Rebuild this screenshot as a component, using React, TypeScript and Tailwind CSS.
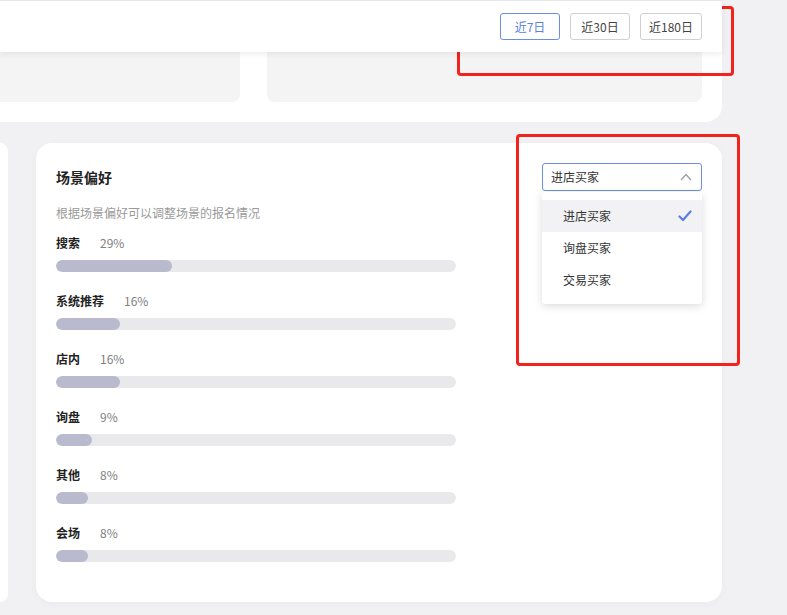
import { useState } from "react";

const scenes = [
  { name: "搜索", pct: 29 },
  { name: "系统推荐", pct: 16 },
  { name: "店内", pct: 16 },
  { name: "询盘", pct: 9 },
  { name: "其他", pct: 8 },
  { name: "会场", pct: 8 },
];

const buyerTypes = ["进店买家", "询盘买家", "交易买家"];
const ranges = [
  { label: "近7日", w: "w-[60px]" },
  { label: "近30日", w: "w-[60px]" },
  { label: "近180日", w: "w-[62px]" },
];

function ChevronUp() {
  return (
    <svg width="12" height="8" viewBox="0 0 12 8" fill="none">
      <path d="M1 7L6 1.5L11 7" stroke="#9a9aa0" strokeWidth="1.2" />
    </svg>
  );
}

function Check() {
  return (
    <svg width="14" height="12" viewBox="0 0 14 12" fill="none">
      <path d="M1.5 6.5L5 10L12.5 1.5" stroke="#5b7ee5" strokeWidth="2.2" strokeLinecap="round" strokeLinejoin="round" />
    </svg>
  );
}

export default function App() {
  const [range, setRange] = useState("近7日");
  const [buyer, setBuyer] = useState("进店买家");

  return (
    <div
      className="relative w-[787px] h-[615px] overflow-hidden bg-[#f1f1f4] text-[#333]"
      style={{ fontFamily: '"Noto Sans CJK SC", "Noto Sans", sans-serif' }}
    >
      {/* top card */}
      <div className="w-[722px] h-[122px] bg-white rounded-br-2xl flex flex-col">
        <div className="h-[52px] bg-white border-t border-[#e6e6ea] shadow-[0_2px_6px_rgba(0,0,0,0.08)] relative z-10 flex items-center justify-end gap-[10px] pr-[20px]">
          {ranges.map((r) => (
            <button
              key={r.label}
              onClick={() => setRange(r.label)}
              className={
                r.w +
                " h-[27px] rounded-[3px] border text-[12px] leading-none " +
                (range === r.label
                  ? "border-[#6b8fde] text-[#5b82dc]"
                  : "border-[#cfcfd4] text-[#444]")
              }
            >
              {r.label}
            </button>
          ))}
        </div>
        <div className="flex gap-[27px] pr-[20px]">
          <div className="w-[240px] h-[50px] bg-[#f4f4f5] rounded-br-lg" />
          <div className="flex-1 h-[50px] bg-[#f4f4f5] rounded-b-lg" />
        </div>
      </div>

      {/* bottom row */}
      <div className="flex gap-[28px] mt-[21px]">
        <div className="w-[8px] h-[459px] bg-white rounded-r-2xl" />
        <div className="relative w-[686px] h-[459px] bg-white rounded-2xl shadow-[0_2px_8px_rgba(0,0,0,0.03)] px-[20px] pt-[24px]">
          <div className="text-[14px] leading-[20px] font-semibold text-[#222]">场景偏好</div>
          <div className="mt-[17px] text-[12px] leading-[18px] text-[#9a9a9a]">
            根据场景偏好可以调整场景的报名情况
          </div>
          <div className="flex flex-col gap-[20px] mt-[12px]">
            {scenes.map((s) => (
              <div key={s.name} className="w-[400px]">
                <div className="flex items-center text-[12px] leading-[18px]">
                  <span className="font-semibold text-[#222]">{s.name}</span>
                  <span className="ml-5 text-[#808080]">{s.pct}%</span>
                </div>
                <div className="mt-[8px] h-[12px] rounded-full bg-[#e9e9ec] overflow-hidden">
                  <div className="h-full rounded-full bg-[#b9bacd]" style={{ width: `${s.pct}%` }} />
                </div>
              </div>
            ))}
          </div>

          {/* select */}
          <div className="absolute top-[20px] right-[20px] w-[160px]">
            <div className="h-[28px] border border-[#6b8fde] rounded-[3px] flex items-center justify-between pl-[8px] pr-[9px] text-[12px] text-[#333] bg-white">
              <span>{buyer}</span>
              <ChevronUp />
            </div>
            <div className="mt-[1px] bg-white rounded-[3px] shadow-[0_2px_8px_rgba(0,0,0,0.15)] py-[8px]">
              {buyerTypes.map((b) => (
                <div
                  key={b}
                  onClick={() => setBuyer(b)}
                  className={
                    "h-[32px] flex items-center justify-between pl-[21px] pr-[10px] text-[12px] text-[#333] cursor-pointer " +
                    (b === buyer ? "bg-[#f2f2f5]" : "")
                  }
                >
                  <span>{b}</span>
                  {b === buyer && <Check />}
                </div>
              ))}
            </div>
          </div>
        </div>
      </div>

      {/* annotation boxes */}
      <div className="absolute left-[457px] top-[6px] w-[277px] h-[70px] border-[3px] border-[#f2221c] rounded-[4px] pointer-events-none" />
      <div className="absolute left-[516px] top-[134px] w-[224px] h-[232px] border-[3px] border-[#f2221c] rounded-[4px] pointer-events-none" />
    </div>
  );
}
